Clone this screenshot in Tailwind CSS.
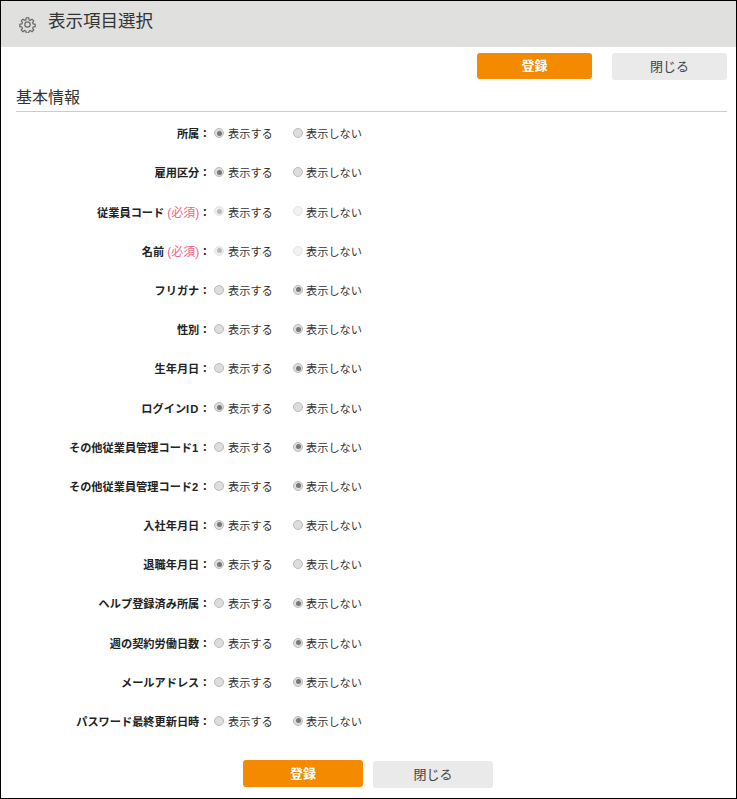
<!DOCTYPE html>
<html lang="ja">
<head>
  <meta charset="UTF-8">
  <title>表示項目選択</title>
  <script src="https://cdn.jsdelivr.net/npm/@tailwindcss/browser@4"></script>
</head>
<body class="bg-white">
<div class="w-[737px] h-[799px] overflow-hidden border border-black bg-white text-[#333] font-['Liberation_Sans','Noto_Sans_CJK_JP',sans-serif]">
  <div class="h-[46px] bg-[#e0e0de] flex items-center pl-[18px] pb-[4px] gap-[12px]">
    <svg class="w-[17px] h-[17px] mt-[5px]" viewBox="0 0 24 24" fill="none" stroke="#666" stroke-width="1.7">
      <circle cx="12" cy="12" r="3.8"/>
      <path d="M10.3 2.5h3.4l.5 2.8 1.9.8 2.3-1.6 2.4 2.4-1.6 2.3.8 1.9 2.8.5v3.4l-2.8.5-.8 1.9 1.6 2.3-2.4 2.4-2.3-1.6-1.9.8-.5 2.8h-3.4l-.5-2.8-1.9-.8-2.3 1.6-2.4-2.4 1.6-2.3-.8-1.9-2.8-.5v-3.4l2.8-.5.8-1.9-1.6-2.3 2.4-2.4 2.3 1.6 1.9-.8z"/>
    </svg>
    <h1 class="text-[17.5px] leading-none text-[#333]">表示項目選択</h1>
  </div>
  <div class="flex justify-end gap-[20px] pr-[9px] pt-[6px]">
    <button class="w-[115px] h-[26px] rounded-[3px] bg-[#f38a00] text-white text-[13px] font-bold">登録</button>
    <button class="w-[115px] h-[27px] rounded-[3px] bg-[#eaeaea] text-[#444] text-[13px]">閉じる</button>
  </div>
  <h2 class="mx-[15px] mr-[9px] mt-[7px] h-[25px] text-[16px] leading-[22px] border-b border-[#ccc] text-[#333]">基本情報</h2>
  <div id="rows" class="mt-[3px] flex flex-col">
    <div class="h-[39.2px] flex items-center text-[11.2px]"><div class="w-[209.5px] text-right font-bold text-[#222]">所属：</div><div class="w-[79px] flex items-center ml-[3.5px]"><span class="w-[10px] h-[10px] -mt-[3px] mr-[4px] rounded-full border border-[#bbb] bg-[#ddd] flex items-center justify-center"><span class="w-[5px] h-[5px] rounded-full bg-[#777]"></span></span>表示する</div><div class="flex items-center"><span class="w-[10px] h-[10px] -mt-[3px] mr-[3px] rounded-full border border-[#bbb] bg-[#ddd]"></span>表示しない</div></div>
    <div class="h-[39.2px] flex items-center text-[11.2px]"><div class="w-[209.5px] text-right font-bold text-[#222]">雇用区分：</div><div class="w-[79px] flex items-center ml-[3.5px]"><span class="w-[10px] h-[10px] -mt-[3px] mr-[4px] rounded-full border border-[#bbb] bg-[#ddd] flex items-center justify-center"><span class="w-[5px] h-[5px] rounded-full bg-[#777]"></span></span>表示する</div><div class="flex items-center"><span class="w-[10px] h-[10px] -mt-[3px] mr-[3px] rounded-full border border-[#bbb] bg-[#ddd]"></span>表示しない</div></div>
    <div class="h-[39.2px] flex items-center text-[11.2px]"><div class="w-[209.5px] text-right font-bold text-[#222]">従業員コード <span class="font-normal text-[12px] text-[#ee6688]">(必須)</span>：</div><div class="w-[79px] flex items-center ml-[3.5px]"><span class="w-[10px] h-[10px] -mt-[3px] mr-[4px] rounded-full border border-[#e2e2e2] bg-[#eee] flex items-center justify-center"><span class="w-[5px] h-[5px] rounded-full bg-[#bbb]"></span></span>表示する</div><div class="flex items-center"><span class="w-[10px] h-[10px] -mt-[3px] mr-[3px] rounded-full border border-[#e2e2e2] bg-[#f2f2f2]"></span>表示しない</div></div>
    <div class="h-[39.2px] flex items-center text-[11.2px]"><div class="w-[209.5px] text-right font-bold text-[#222]">名前 <span class="font-normal text-[12px] text-[#ee6688]">(必須)</span>：</div><div class="w-[79px] flex items-center ml-[3.5px]"><span class="w-[10px] h-[10px] -mt-[3px] mr-[4px] rounded-full border border-[#e2e2e2] bg-[#eee] flex items-center justify-center"><span class="w-[5px] h-[5px] rounded-full bg-[#bbb]"></span></span>表示する</div><div class="flex items-center"><span class="w-[10px] h-[10px] -mt-[3px] mr-[3px] rounded-full border border-[#e2e2e2] bg-[#f2f2f2]"></span>表示しない</div></div>
    <div class="h-[39.2px] flex items-center text-[11.2px]"><div class="w-[209.5px] text-right font-bold text-[#222]">フリガナ：</div><div class="w-[79px] flex items-center ml-[3.5px]"><span class="w-[10px] h-[10px] -mt-[3px] mr-[4px] rounded-full border border-[#bbb] bg-[#ddd]"></span>表示する</div><div class="flex items-center"><span class="w-[10px] h-[10px] -mt-[3px] mr-[3px] rounded-full border border-[#bbb] bg-[#ddd] flex items-center justify-center"><span class="w-[5px] h-[5px] rounded-full bg-[#777]"></span></span>表示しない</div></div>
    <div class="h-[39.2px] flex items-center text-[11.2px]"><div class="w-[209.5px] text-right font-bold text-[#222]">性別：</div><div class="w-[79px] flex items-center ml-[3.5px]"><span class="w-[10px] h-[10px] -mt-[3px] mr-[4px] rounded-full border border-[#bbb] bg-[#ddd]"></span>表示する</div><div class="flex items-center"><span class="w-[10px] h-[10px] -mt-[3px] mr-[3px] rounded-full border border-[#bbb] bg-[#ddd] flex items-center justify-center"><span class="w-[5px] h-[5px] rounded-full bg-[#777]"></span></span>表示しない</div></div>
    <div class="h-[39.2px] flex items-center text-[11.2px]"><div class="w-[209.5px] text-right font-bold text-[#222]">生年月日：</div><div class="w-[79px] flex items-center ml-[3.5px]"><span class="w-[10px] h-[10px] -mt-[3px] mr-[4px] rounded-full border border-[#bbb] bg-[#ddd]"></span>表示する</div><div class="flex items-center"><span class="w-[10px] h-[10px] -mt-[3px] mr-[3px] rounded-full border border-[#bbb] bg-[#ddd] flex items-center justify-center"><span class="w-[5px] h-[5px] rounded-full bg-[#777]"></span></span>表示しない</div></div>
    <div class="h-[39.2px] flex items-center text-[11.2px]"><div class="w-[209.5px] text-right font-bold text-[#222]">ログイン<span class="tracking-[1px]">ID</span>：</div><div class="w-[79px] flex items-center ml-[3.5px]"><span class="w-[10px] h-[10px] -mt-[3px] mr-[4px] rounded-full border border-[#bbb] bg-[#ddd] flex items-center justify-center"><span class="w-[5px] h-[5px] rounded-full bg-[#777]"></span></span>表示する</div><div class="flex items-center"><span class="w-[10px] h-[10px] -mt-[3px] mr-[3px] rounded-full border border-[#bbb] bg-[#ddd]"></span>表示しない</div></div>
    <div class="h-[39.2px] flex items-center text-[11.2px]"><div class="w-[209.5px] text-right font-bold text-[#222]">その他従業員管理コード<span class="tracking-[1px]">1</span>：</div><div class="w-[79px] flex items-center ml-[3.5px]"><span class="w-[10px] h-[10px] -mt-[3px] mr-[4px] rounded-full border border-[#bbb] bg-[#ddd]"></span>表示する</div><div class="flex items-center"><span class="w-[10px] h-[10px] -mt-[3px] mr-[3px] rounded-full border border-[#bbb] bg-[#ddd] flex items-center justify-center"><span class="w-[5px] h-[5px] rounded-full bg-[#777]"></span></span>表示しない</div></div>
    <div class="h-[39.2px] flex items-center text-[11.2px]"><div class="w-[209.5px] text-right font-bold text-[#222]">その他従業員管理コード<span class="tracking-[1px]">2</span>：</div><div class="w-[79px] flex items-center ml-[3.5px]"><span class="w-[10px] h-[10px] -mt-[3px] mr-[4px] rounded-full border border-[#bbb] bg-[#ddd]"></span>表示する</div><div class="flex items-center"><span class="w-[10px] h-[10px] -mt-[3px] mr-[3px] rounded-full border border-[#bbb] bg-[#ddd] flex items-center justify-center"><span class="w-[5px] h-[5px] rounded-full bg-[#777]"></span></span>表示しない</div></div>
    <div class="h-[39.2px] flex items-center text-[11.2px]"><div class="w-[209.5px] text-right font-bold text-[#222]">入社年月日：</div><div class="w-[79px] flex items-center ml-[3.5px]"><span class="w-[10px] h-[10px] -mt-[3px] mr-[4px] rounded-full border border-[#bbb] bg-[#ddd] flex items-center justify-center"><span class="w-[5px] h-[5px] rounded-full bg-[#777]"></span></span>表示する</div><div class="flex items-center"><span class="w-[10px] h-[10px] -mt-[3px] mr-[3px] rounded-full border border-[#bbb] bg-[#ddd]"></span>表示しない</div></div>
    <div class="h-[39.2px] flex items-center text-[11.2px]"><div class="w-[209.5px] text-right font-bold text-[#222]">退職年月日：</div><div class="w-[79px] flex items-center ml-[3.5px]"><span class="w-[10px] h-[10px] -mt-[3px] mr-[4px] rounded-full border border-[#bbb] bg-[#ddd] flex items-center justify-center"><span class="w-[5px] h-[5px] rounded-full bg-[#777]"></span></span>表示する</div><div class="flex items-center"><span class="w-[10px] h-[10px] -mt-[3px] mr-[3px] rounded-full border border-[#bbb] bg-[#ddd]"></span>表示しない</div></div>
    <div class="h-[39.2px] flex items-center text-[11.2px]"><div class="w-[209.5px] text-right font-bold text-[#222]">ヘルプ登録済み所属：</div><div class="w-[79px] flex items-center ml-[3.5px]"><span class="w-[10px] h-[10px] -mt-[3px] mr-[4px] rounded-full border border-[#bbb] bg-[#ddd]"></span>表示する</div><div class="flex items-center"><span class="w-[10px] h-[10px] -mt-[3px] mr-[3px] rounded-full border border-[#bbb] bg-[#ddd] flex items-center justify-center"><span class="w-[5px] h-[5px] rounded-full bg-[#777]"></span></span>表示しない</div></div>
    <div class="h-[39.2px] flex items-center text-[11.2px]"><div class="w-[209.5px] text-right font-bold text-[#222]">週の契約労働日数：</div><div class="w-[79px] flex items-center ml-[3.5px]"><span class="w-[10px] h-[10px] -mt-[3px] mr-[4px] rounded-full border border-[#bbb] bg-[#ddd]"></span>表示する</div><div class="flex items-center"><span class="w-[10px] h-[10px] -mt-[3px] mr-[3px] rounded-full border border-[#bbb] bg-[#ddd] flex items-center justify-center"><span class="w-[5px] h-[5px] rounded-full bg-[#777]"></span></span>表示しない</div></div>
    <div class="h-[39.2px] flex items-center text-[11.2px]"><div class="w-[209.5px] text-right font-bold text-[#222]">メールアドレス：</div><div class="w-[79px] flex items-center ml-[3.5px]"><span class="w-[10px] h-[10px] -mt-[3px] mr-[4px] rounded-full border border-[#bbb] bg-[#ddd]"></span>表示する</div><div class="flex items-center"><span class="w-[10px] h-[10px] -mt-[3px] mr-[3px] rounded-full border border-[#bbb] bg-[#ddd] flex items-center justify-center"><span class="w-[5px] h-[5px] rounded-full bg-[#777]"></span></span>表示しない</div></div>
    <div class="h-[39.2px] flex items-center text-[11.2px]"><div class="w-[209.5px] text-right font-bold text-[#222]">パスワード最終更新日時：</div><div class="w-[79px] flex items-center ml-[3.5px]"><span class="w-[10px] h-[10px] -mt-[3px] mr-[4px] rounded-full border border-[#bbb] bg-[#ddd]"></span>表示する</div><div class="flex items-center"><span class="w-[10px] h-[10px] -mt-[3px] mr-[3px] rounded-full border border-[#bbb] bg-[#ddd] flex items-center justify-center"><span class="w-[5px] h-[5px] rounded-full bg-[#777]"></span></span>表示しない</div></div>
  </div>
  <div class="flex justify-center items-start gap-[10px] mt-[18px] pr-[1px]">
    <button class="w-[120px] h-[27px] rounded-[3px] bg-[#f38a00] text-white text-[13px] font-bold">登録</button>
    <button class="w-[120px] h-[27px] mt-[1px] rounded-[3px] bg-[#eaeaea] text-[#444] text-[13px]">閉じる</button>
  </div>
</div>
</body>
</html>
